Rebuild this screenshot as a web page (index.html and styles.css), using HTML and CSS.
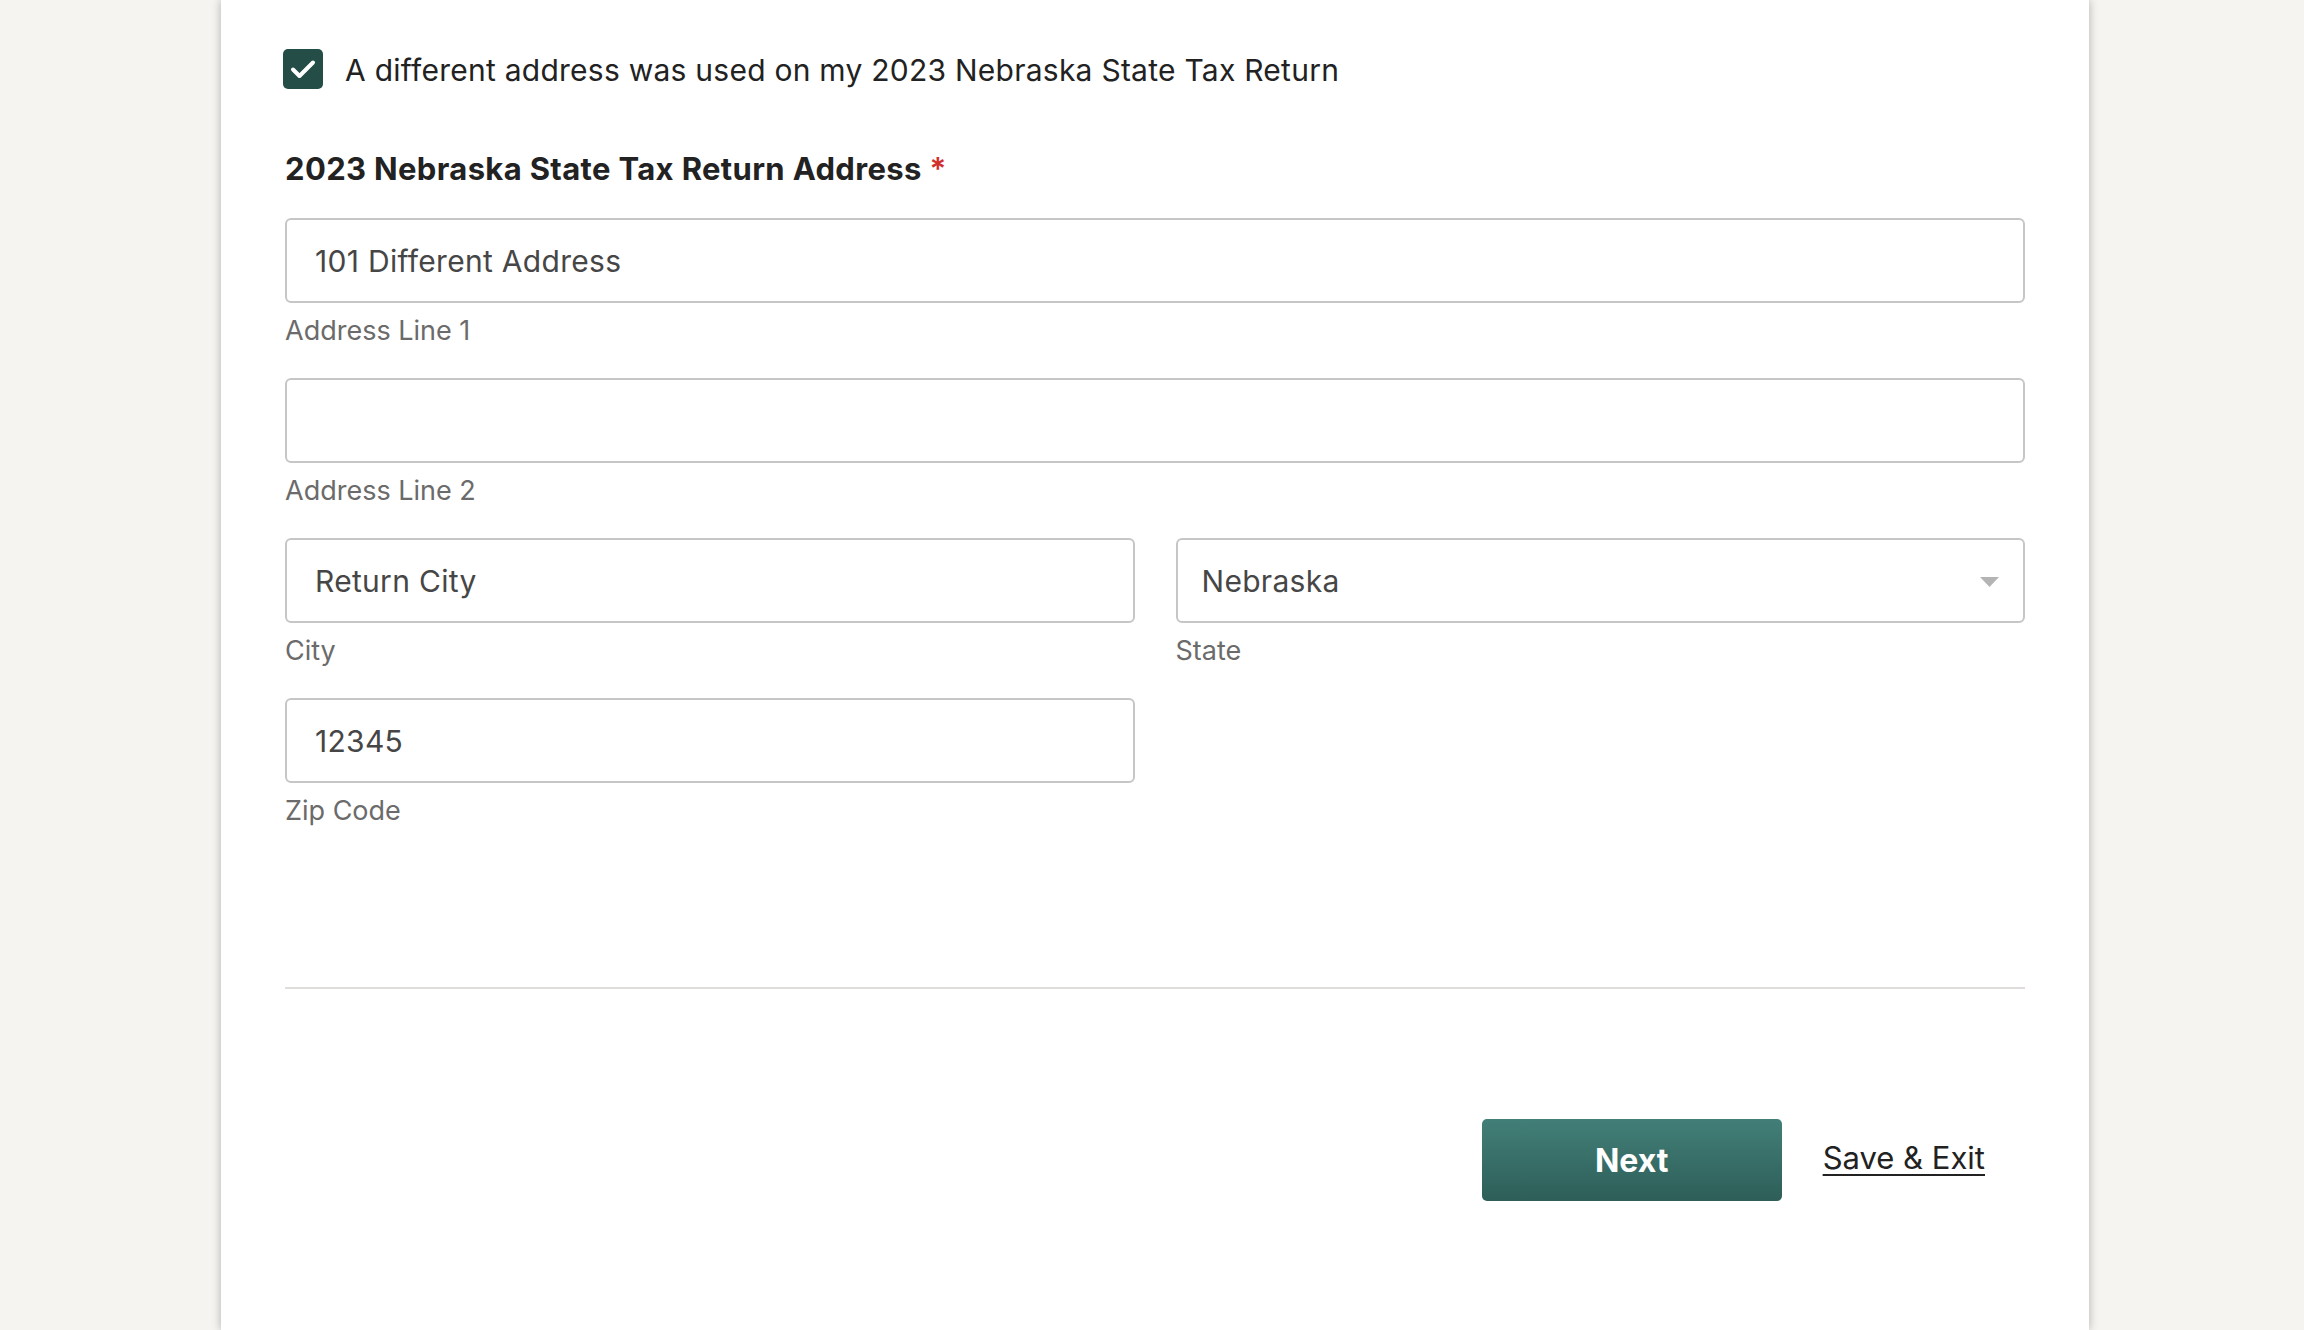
FILE: index.html
```html
<!DOCTYPE html>
<html lang="en">
<head>
<meta charset="utf-8">
<title>Nebraska State Tax Return Address</title>
<link rel="stylesheet" href="styles.css">
</head>
<body>
<main class="card">
  <label class="check-row">
    <span class="checkbox">
      <svg width="40" height="40" viewBox="0 0 40 40" aria-hidden="true">
        <path d="M10 20.5 L16.5 27 L30 13.5" fill="none" stroke="#fff" stroke-width="4" stroke-linecap="round" stroke-linejoin="round"/>
      </svg>
    </span>
    <span class="check-text">A different address was used on my 2023 Nebraska State Tax Return</span>
  </label>

  <h2 class="section-title">2023 Nebraska State Tax Return Address <span class="req">*</span></h2>

  <div class="field">
    <input class="text-input" type="text" value="101 Different Address" readonly>
    <div class="hint">Address Line 1</div>
  </div>

  <div class="field">
    <input class="text-input" type="text" value="" readonly>
    <div class="hint">Address Line 2</div>
  </div>

  <div class="row">
    <div class="field">
      <input class="text-input" type="text" value="Return City" readonly>
      <div class="hint">City</div>
    </div>
    <div class="field">
      <div class="select-box">
        <span class="select-value">Nebraska</span>
        <svg class="select-arrow" width="19" height="10" viewBox="0 0 19 10" aria-hidden="true">
          <path d="M0 0 H19 L9.5 10 Z" fill="#b4b4b4"/>
        </svg>
      </div>
      <div class="hint">State</div>
    </div>
  </div>

  <div class="row">
    <div class="field">
      <input class="text-input" type="text" value="12345" readonly>
      <div class="hint">Zip Code</div>
    </div>
  </div>

  <hr class="divider">

  <div class="actions">
    <button class="btn-next" type="button">Next</button>
    <a class="save-exit" href="#">Save &amp; Exit</a>
  </div>
</main>
</body>
</html>
```

FILE: styles.css
```css
* {
  box-sizing: border-box;
}

html, body {
  margin: 0;
  padding: 0;
}

body {
  background: #f5f4f0;
  font-family: Inter, "Noto Sans", "Liberation Sans", sans-serif;
  color: #222;
  overflow: hidden;
}

.card {
  width: 1868px;
  min-height: 1330px;
  margin-left: 221px;
  background: #fff;
  box-shadow: 0 0 9px rgba(0, 0, 0, 0.28);
  padding: 49px 64px 0 64px;
}

.check-row {
  display: flex;
  align-items: center;
  gap: 22px;
  height: 40px;
  margin-left: -2px;
}

.checkbox {
  width: 40px;
  height: 40px;
  border-radius: 5px;
  background: #244d48;
  display: flex;
  flex: none;
}

.check-text {
  font-size: 30px;
  letter-spacing: 0.25px;
  line-height: 40px;
  color: #222;
  padding-top: 2px;
}

.section-title {
  margin: 60px 0 29px 0;
  font-size: 31px;
  letter-spacing: 0.35px;
  line-height: 40px;
  font-weight: 700;
  color: #222;
}

.req {
  color: #d0312d;
  font-weight: 600;
  margin-left: 0;
}

.field {
  margin-bottom: 29px;
  min-width: 0;
}

.text-input,
.select-box {
  display: block;
  width: 100%;
  height: 85px;
  border: 2px solid #c6c6c6;
  border-radius: 6px;
  background: #fff;
  padding: 0 28px;
  font-family: inherit;
  font-size: 30px;
  letter-spacing: 0.3px;
  color: #464646;
  outline: none;
}

.select-box {
  display: flex;
  align-items: center;
  justify-content: space-between;
  padding: 0 24px 0 24px;
}

.select-value {
  font-size: 30px;
  color: #464646;
}

.select-arrow {
  flex: none;
  margin-top: 2px;
}

.hint {
  margin-top: 10px;
  font-size: 27px;
  line-height: 36px;
  color: #6b6b6b;
}

.row {
  display: grid;
  grid-template-columns: 1fr 1fr;
  column-gap: 41px;
}

.divider {
  border: none;
  height: 2px;
  background: #e1dddd;
  margin: 129px 0 0 0;
}

.actions {
  display: flex;
  justify-content: flex-end;
  align-items: center;
  gap: 41px;
  margin-top: 130px;
  padding-right: 40px;
}

.btn-next {
  width: 300px;
  height: 82px;
  border: none;
  border-radius: 5px;
  background: linear-gradient(to bottom, #427f78, #2e5e58);
  color: #fff;
  font-family: inherit;
  font-size: 32px;
  font-weight: 700;
  cursor: pointer;
}

.save-exit {
  font-size: 31px;
  color: #222;
  text-decoration: underline;
  text-decoration-thickness: 2px;
  text-underline-offset: 5px;
  margin-top: -6px;
}
```
